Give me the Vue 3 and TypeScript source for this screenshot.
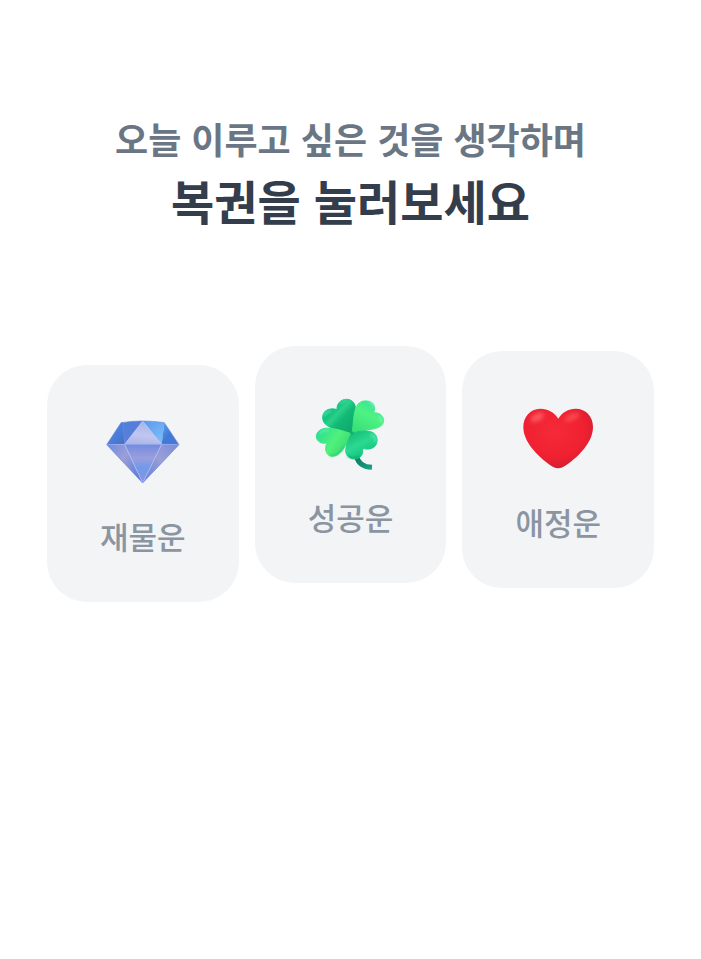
<script setup lang="ts">
import { ref } from 'vue'

type FortuneId = 'wealth' | 'success' | 'love'

interface Fortune {
  id: FortuneId
  label: string
}

const fortunes: Fortune[] = [
  { id: 'wealth', label: '재물운' },
  { id: 'success', label: '성공운' },
  { id: 'love', label: '애정운' },
]

const selected = ref<FortuneId | null>(null)
</script>

<template>
  <main class="page" lang="ko">
    <h1 class="heading">
      <span class="lead">오늘 이루고 싶은 것을 생각하며</span>
      <span class="title">복권을 눌러보세요</span>
    </h1>

    <div class="cards">
      <button
        v-for="fortune in fortunes"
        :key="fortune.id"
        type="button"
        class="card"
        :class="fortune.id"
        :aria-pressed="selected === fortune.id"
        @click="selected = fortune.id"
      >
        <svg v-if="fortune.id === 'wealth'" class="icon" viewBox="24 24 240 240" aria-hidden="true">
          <defs>
            <linearGradient id="gemLeft" x1="0" y1="0" x2="1" y2="1">
              <stop offset="0" stop-color="#4272cf" />
              <stop offset="0.5" stop-color="#4a80dc" />
              <stop offset="1" stop-color="#4a6cc6" />
            </linearGradient>
            <linearGradient id="gemUpperLeft" x1="0" y1="0" x2="0.6" y2="1">
              <stop offset="0" stop-color="#4f7fdb" />
              <stop offset="1" stop-color="#5f7ed6" />
            </linearGradient>
            <linearGradient id="gemTable" x1="0.6" y1="0" x2="0.4" y2="1">
              <stop offset="0" stop-color="#a3b2ec" />
              <stop offset="0.6" stop-color="#c2c6ef" />
              <stop offset="1" stop-color="#adb6ea" />
            </linearGradient>
            <linearGradient id="gemUpperRight" x1="0" y1="0" x2="0.8" y2="1">
              <stop offset="0" stop-color="#5b96ea" />
              <stop offset="1" stop-color="#7bc2fa" />
            </linearGradient>
            <linearGradient id="gemRight" x1="0" y1="0" x2="1" y2="1">
              <stop offset="0" stop-color="#5aa5f2" />
              <stop offset="0.5" stop-color="#3f79d6" />
              <stop offset="1" stop-color="#5076d0" />
            </linearGradient>
            <linearGradient id="gemLowerLeft" x1="0" y1="0" x2="1" y2="0.8">
              <stop offset="0" stop-color="#6f8ade" />
              <stop offset="0.45" stop-color="#9b9fd9" />
              <stop offset="1" stop-color="#5878d6" />
            </linearGradient>
            <linearGradient id="gemCenter" x1="0" y1="0" x2="0" y2="1">
              <stop offset="0" stop-color="#738ae0" />
              <stop offset="0.35" stop-color="#9a9fdc" />
              <stop offset="0.6" stop-color="#719ae9" />
              <stop offset="1" stop-color="#8795df" />
            </linearGradient>
            <linearGradient id="gemLowerRight" x1="1" y1="0" x2="0" y2="1">
              <stop offset="0" stop-color="#778cdc" />
              <stop offset="0.45" stop-color="#9a9fd5" />
              <stop offset="1" stop-color="#617dd8" />
            </linearGradient>
          </defs>
          <path d="M35 119 78 53 85 51 90 118Z" fill="url(#gemLeft)" />
          <path d="M82 53Q108 47 143 48L89 118Z" fill="url(#gemUpperLeft)" />
          <path d="M143 48Q180 48 208 53L200 118Z" fill="url(#gemUpperRight)" />
          <path d="M208 53 252 119 200 118Z" fill="url(#gemRight)" />
          <path d="M143 49 200 118H89Z" fill="url(#gemTable)" />
          <path d="M35 119H89L143 234Z" fill="url(#gemLowerLeft)" />
          <path d="M89 118H200L143 234Z" fill="url(#gemCenter)" />
          <path d="M200 118 252 119 143 234Z" fill="url(#gemLowerRight)" />
          <path d="M143 49 89 118 143 234 200 118Z" fill="none" stroke="#b0c1f4" stroke-width="2" />
          <path d="M35 119 89 118H200L252 119" fill="none" stroke="#93aaf0" stroke-width="2" />
          <path d="M84 53 89 118M206 53 200 118" fill="none" stroke="#6d9ae6" stroke-width="1" />
          <path d="M35 119 78 53Q143 43 208 53L252 119 143 234Z" fill="none" stroke="#6b8bdc" stroke-width="2" stroke-linejoin="round" />
        </svg>

        <svg v-else-if="fortune.id === 'success'" class="icon" viewBox="15 12 240 240" aria-hidden="true">
          <defs>
            <linearGradient id="leafNorthWest" x1="0.1" y1="0.1" x2="0.9" y2="0.9">
              <stop offset="0" stop-color="#1fd58f" />
              <stop offset="0.28" stop-color="#14c47c" />
              <stop offset="0.42" stop-color="#2bd08a" />
              <stop offset="0.6" stop-color="#12b976" />
              <stop offset="1" stop-color="#10a76c" />
            </linearGradient>
            <linearGradient id="leafNorthEast" x1="0.8" y1="0" x2="0.3" y2="1">
              <stop offset="0" stop-color="#2be59a" />
              <stop offset="0.45" stop-color="#50f282" />
              <stop offset="1" stop-color="#38e07a" />
            </linearGradient>
            <linearGradient id="leafSouthWest" x1="0" y1="0.2" x2="1" y2="0.7">
              <stop offset="0" stop-color="#29df91" />
              <stop offset="0.5" stop-color="#51f17c" />
              <stop offset="1" stop-color="#35d66f" />
            </linearGradient>
            <linearGradient id="leafSouthEast" x1="0.2" y1="0" x2="0.8" y2="1">
              <stop offset="0" stop-color="#12bc75" />
              <stop offset="0.45" stop-color="#2bd991" />
              <stop offset="1" stop-color="#08bd79" />
            </linearGradient>
            <linearGradient id="stem" x1="0" y1="0" x2="1" y2="1">
              <stop offset="0" stop-color="#08795d" />
              <stop offset="1" stop-color="#16a283" />
            </linearGradient>
            <filter id="leafGlow" x="-50%" y="-50%" width="200%" height="200%">
              <feGaussianBlur stdDeviation="3" />
            </filter>
          </defs>
          <path d="M154 196C158 218 172 231 201 232" fill="none" stroke="url(#stem)" stroke-width="15" />
          <circle cx="140" cy="130" r="11" fill="#16b36e" />
          <g stroke-width="3" stroke-linejoin="round">
            <path d="M142 131C112 120 78 117 64 105C46 91 50 60 76 57C84 56 90 57 96 59C95 40 108 28 125 28C146 28 153 46 152 66C149 90 147 110 142 131Z" fill="url(#leafNorthWest)" stroke="url(#leafNorthWest)" />
            <path d="M141 130C146 104 144 72 154 50C163 29 192 28 204 42C210 50 210 59 206 69C224 66 237 80 236 94C233 110 216 115 199 118C178 121 158 124 141 130Z" fill="url(#leafNorthEast)" stroke="url(#leafNorthEast)" />
            <path d="M140 131C127 155 117 179 101 192C87 203 69 200 64 187C60 178 62 168 66 158C49 164 34 153 34 139C36 118 57 113 75 115C99 117 118 125 140 131Z" fill="url(#leafSouthWest)" stroke="url(#leafSouthWest)" />
            <path d="M139 131C164 122 188 120 204 128C220 137 220 161 207 171C198 178 186 179 173 175C175 192 168 204 154 206C137 209 122 198 122 183C122 166 130 149 139 131Z" fill="url(#leafSouthEast)" stroke="url(#leafSouthEast)" />
          </g>
          <circle cx="141" cy="129" r="5" fill="#0b9e5f" opacity=".6" />
          <g filter="url(#leafGlow)" fill="none" stroke-linecap="round">
            <path d="M105 40Q114 31 125 32M59 76Q65 64 77 64" stroke="#74f1c1" stroke-width="4" opacity=".7" />
            <path d="M194 37Q205 41 204 50M223 78Q231 86 228 95" stroke="#82f6c8" stroke-width="5" opacity=".8" />
            <path d="M45 129Q54 119 69 121" stroke="#81f2b3" stroke-width="5" opacity=".7" />
            <path d="M199 133Q213 143 211 154" stroke="#69efba" stroke-width="5" opacity=".8" />
            <path d="M75 197Q99 199 118 170" stroke="#12b76b" stroke-width="4" opacity=".55" />
            <path d="M128 198Q145 209 161 199" stroke="#068f60" stroke-width="4" opacity=".7" />
          </g>
        </svg>

        <svg v-else class="icon" viewBox="24 12 240 240" aria-hidden="true">
          <defs>
            <radialGradient id="heartBody" cx="0.45" cy="0.38" r="0.68">
              <stop offset="0" stop-color="#f52a39" />
              <stop offset="0.62" stop-color="#f02131" />
              <stop offset="0.85" stop-color="#db1f32" />
              <stop offset="1" stop-color="#b82336" />
            </radialGradient>
            <filter id="heartGlow" x="-50%" y="-50%" width="200%" height="200%">
              <feGaussianBlur stdDeviation="7" />
            </filter>
          </defs>
          <path d="M145 71C133 52 114 41 91 41C60 41 40 66 40 96C40 139 79 180 121 211C137 223 152 223 168 211C211 181 249 139 249 96C249 65 228 41 197 41C175 41 156 52 145 71Z" fill="url(#heartBody)" />
          <g filter="url(#heartGlow)">
            <ellipse cx="82" cy="67" rx="22" ry="11" transform="rotate(-28 82 67)" fill="#ff7774" opacity=".65" />
            <ellipse cx="187" cy="66" rx="24" ry="9" transform="rotate(-25 187 66)" fill="#ff6868" opacity=".6" />
          </g>
        </svg>

        <span class="label">{{ fortune.label }}</span>
      </button>
    </div>
  </main>
</template>

<style>
body {
  margin: 0;
  background: #ffffff;
}
</style>

<style scoped>
.page {
  box-sizing: border-box;
  min-height: 100vh;
  padding: 110px 47px 48px;
  font-family: 'Noto Sans CJK KR', sans-serif;
}

.heading {
  display: flex;
  flex-direction: column;
  align-items: center;
  margin: 0;
  text-align: center;
}

.lead {
  color: #6b7684;
  font-size: 36px;
  font-weight: 700;
  line-height: 56px;
}

.title {
  color: #333d4b;
  font-size: 47px;
  font-weight: 700;
  line-height: 68px;
}

.cards {
  display: grid;
  grid-template-columns: repeat(3, 1fr);
  align-items: start;
  gap: 16px;
  margin-top: 112px;
}

.card {
  display: flex;
  flex-direction: column;
  align-items: center;
  gap: 24px;
  padding: 48px 0 47px;
  border: 0;
  border-radius: 40px;
  background: #f2f4f6;
  color: #8b95a1;
  font: inherit;
  cursor: pointer;
}

.wealth {
  margin-top: 19px;
}

.love {
  margin-top: 5px;
}

.icon {
  display: block;
  width: 80px;
  height: 80px;
}

.label {
  font-size: 31px;
  font-weight: 500;
  line-height: 38px;
}
</style>
